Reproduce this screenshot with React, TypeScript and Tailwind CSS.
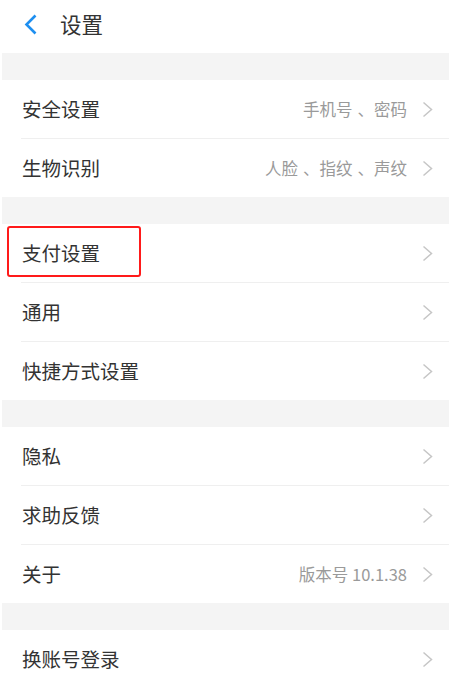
import React from "react";

type Item = { label: string; value?: string; boxed?: boolean };

const GROUPS: Item[][] = [
  [
    { label: "安全设置", value: "手机号 、密码" },
    { label: "生物识别", value: "人脸 、指纹 、声纹" },
  ],
  [{ label: "支付设置", boxed: true }, { label: "通用" }, { label: "快捷方式设置" }],
  [{ label: "隐私" }, { label: "求助反馈" }, { label: "关于", value: "版本号 10.1.38" }],
  [{ label: "换账号登录" }],
];

const font = { fontFamily: '"Noto Sans CJK SC", "Noto Sans", sans-serif' };

function Chevron() {
  return (
    <svg width="11" height="17" viewBox="0 0 11 17" className="shrink-0">
      <path d="M1.5 1.5 L9.5 8.5 L1.5 15.5" fill="none" stroke="#c6c6c6" strokeWidth="1.5" />
    </svg>
  );
}

// the pause mark sits mid-gap in the original, pad it over a little
function Value({ text }: { text: string }) {
  const parts = text.split(" 、");
  return (
    <span className="mr-[15px] text-[16.5px] text-[#9a9a9a]">
      {parts.map((p, i) => (
        <React.Fragment key={i}>
          {i > 0 && <span className="pl-[5px]">、</span>}
          {p}
        </React.Fragment>
      ))}
    </span>
  );
}

function Row({ item }: { item: Item }) {
  return (
    <div className="relative flex h-[58px] items-center pl-[22px] pr-[16px]">
      <span className="flex-1 text-[19.5px] text-[#333333]">{item.label}</span>
      {item.value && <Value text={item.value} />}
      <Chevron />
      {item.boxed && (
        <div className="absolute left-[7px] top-[2px] h-[51px] w-[134px] rounded-[3px] border-2 border-[#ff1a1a]" />
      )}
    </div>
  );
}

export default function App() {
  return (
    <div className="min-h-[683px] w-[449px] overflow-hidden bg-white" style={font}>
      <div className="flex h-[53px] items-center pb-[5px] pl-[24px]">
        <svg width="14" height="21" viewBox="0 0 14 21">
          <path d="M11.5 1.5 L2.5 10.5 L11.5 19.5" fill="none" stroke="#1e8ff0" strokeWidth="2.6" />
        </svg>
        <span className="ml-[22px] text-[21.5px] text-[#333333]">设置</span>
      </div>
      {GROUPS.map((g, gi) => (
        <div key={gi}>
          <div className="ml-[2px] h-[27px] bg-[#f4f4f4]" />
          {g.map((item, i) => (
            <div key={item.label}>
              {i > 0 && <div className="ml-[21px] h-px bg-[#efefef]" />}
              <Row item={item} />
            </div>
          ))}
        </div>
      ))}
    </div>
  );
}
